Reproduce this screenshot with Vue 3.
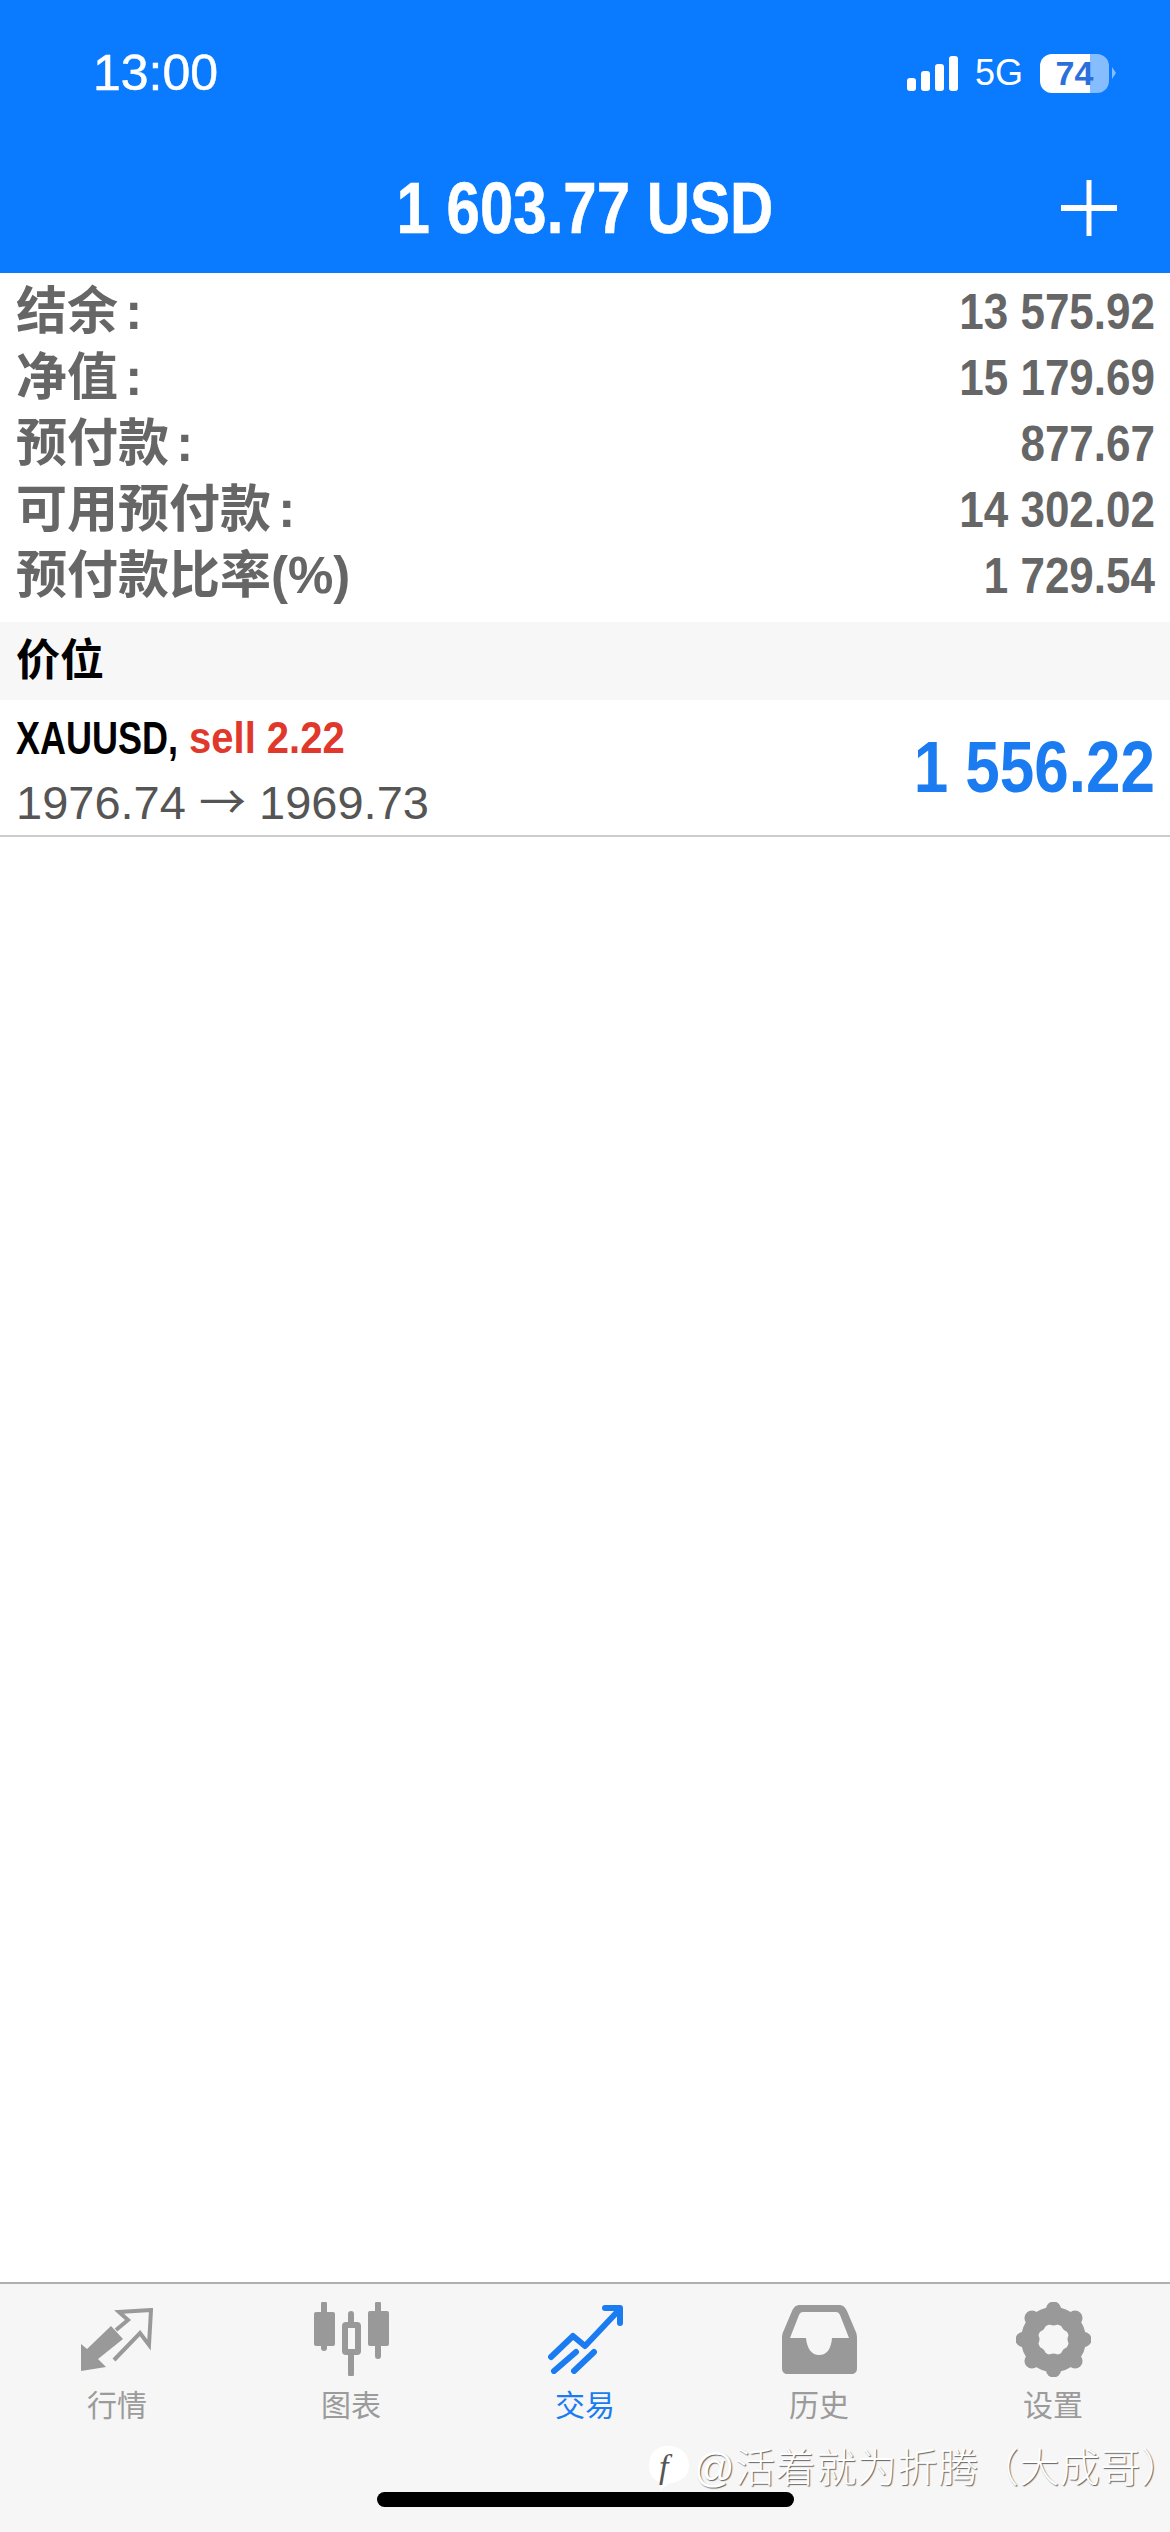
<template>
  <div class="screen">
    <!-- 顶部蓝色栏 -->
    <header class="top">
      <div class="status">
        <span class="time">13:00</span>
        <div class="status-right">
          <div class="signal">
            <i v-for="h in signalBars" :key="h" :style="{ height: h + 'px' }"></i>
          </div>
          <span class="net">5G</span>
          <div class="battery"><span>74</span></div>
          <b class="nub"></b>
        </div>
      </div>
      <div class="title-row">
        <span></span>
        <h1 class="title">1 603.77 USD</h1>
        <svg class="plus" width="56" height="56" viewBox="0 0 56 56">
          <path d="M28 0V56" stroke="#fff" stroke-width="5" />
          <path d="M0 28H56" stroke="#fff" stroke-width="6" />
        </svg>
      </div>
    </header>

    <main class="main">
      <!-- 账户信息 -->
      <section class="summary">
        <div v-for="row in summary" :key="row.label" class="sum-row">
          <span class="sum-label">{{ row.label }}</span>
          <span class="sum-value">{{ row.value }}</span>
        </div>
      </section>

      <div class="band">价位</div>

      <div class="position">
        <div class="pos-left">
          <div class="pos-head"><span class="sym">XAUUSD,</span><span class="side">sell 2.22</span></div>
          <div class="pos-price">1976.74 <span class="arrow">→</span> 1969.73</div>
        </div>
        <span class="profit">1 556.22</span>
      </div>
    </main>

    <!-- 底部导航 -->
    <nav class="tabs">
      <div class="tab-row">
        <div class="tab">
          <div class="tab-icon">
            <svg width="72" height="63" viewBox="0 0 72 63">
              <path d="M0 63V36L6 41L30 18L42 31L17 51L25 59Z" fill="#999" />
              <path d="M35 22L47 12L38 4L70 2L68 37L59 25L33 52" fill="none" stroke="#999" stroke-width="4" />
            </svg>
          </div>
          <span class="tab-label">行情</span>
        </div>
        <div class="tab">
          <div class="tab-icon">
            <svg width="75" height="74" viewBox="0 0 75 74">
              <path d="M10 2V46M64 2V54M37 12V72" stroke="#999" stroke-width="6" stroke-linecap="round" />
              <rect x="0" y="10" width="21" height="34" rx="2" fill="#999" />
              <rect x="54" y="9" width="21" height="35" rx="2" fill="#999" />
              <rect x="31" y="23" width="13" height="27" rx="1" fill="#f6f6f6" stroke="#999" stroke-width="6" />
            </svg>
          </div>
          <span class="tab-label">图表</span>
        </div>
        <div class="tab active">
          <div class="tab-icon">
            <svg width="75" height="70" viewBox="0 0 75 70" fill="none" stroke="#1a7cf0" stroke-width="6" stroke-linecap="round" stroke-linejoin="round">
              <path d="M3 53L25 32L37 42L71 6" />
              <path d="M57 4H72V19" />
              <path d="M6 67L28 48M26 67L46 48" />
            </svg>
          </div>
          <span class="tab-label">交易</span>
        </div>
        <div class="tab">
          <div class="tab-icon">
            <svg width="75" height="69" viewBox="0 0 75 69">
              <path fill="#999" fill-rule="evenodd" d="M18 0H57C61 0 63 2 65 6L73 25C74.500 28 75 30 75 33V63C75 67 73 69 69 69H6C2 69 0 67 0 63V33C0 30 .5 28 2 25L10 6C12 2 14 0 18 0ZM21 7C19 7 18 8 17 10L8 33H24C25 44 30 50 37 50C45 50 49 44 50 33H67L58 10C57 8 56 7 54 7Z" />
            </svg>
          </div>
          <span class="tab-label">历史</span>
        </div>
        <div class="tab">
          <div class="tab-icon">
            <svg width="75" height="75" viewBox="0 0 75 75">
              <circle cx="37.500" cy="37.500" r="24" fill="none" stroke="#999" stroke-width="17" />
              <line v-for="a in gearAngles" :key="a" x1="37.500" y1="16" x2="37.500" y2="7"
                stroke="#999" stroke-width="15" stroke-linecap="round" :transform="`rotate(${a} 37.500 37.500)`" />
            </svg>
          </div>
          <span class="tab-label">设置</span>
        </div>
      </div>
      <div class="home-bar"></div>
    </nav>

    <!-- 水印 -->
    <div class="watermark">
      <svg width="42" height="46" viewBox="0 0 42 46">
        <path d="M20 1C32 1 41 8 41 21C41 31 33 37 22 38L12 45L14 38C6 36 1 30 1 21C1 8 8 1 20 1Z" fill="#fff" />
        <text x="11" y="33" class="wm-f">f</text>
      </svg>
      <span class="wm-text">@活着就为折腾（大成哥）</span>
    </div>
  </div>
</template>

<script setup>
const signalBars = [13, 20, 27, 35]
const gearAngles = [0, 45, 90, 135, 180, 225, 270, 315]

const summary = [
  { label: '结余 :', value: '13 575.92' },
  { label: '净值 :', value: '15 179.69' },
  { label: '预付款 :', value: '877.67' },
  { label: '可用预付款 :', value: '14 302.02' },
  { label: '预付款比率(%)', value: '1 729.54' },
]
</script>

<style scoped>
.screen {
  position: relative;
  width: 1170px;
  height: 2532px;
  overflow: hidden;
  display: flex;
  flex-direction: column;
  background: #fff;
  font-family: "Liberation Sans", "Noto Sans CJK SC", sans-serif;
}

.top {
  height: 273px;
  background: #0a7aff;
  color: #fff;
  flex-shrink: 0;
}

.status {
  height: 146px;
  padding: 0 54px 0 93px;
  display: flex;
  align-items: center;
  justify-content: space-between;
}

.time {
  font-size: 50px;
  -webkit-text-stroke: 0.5px #fff;
}

.status-right {
  display: flex;
  align-items: center;
}

.signal {
  display: flex;
  align-items: flex-end;
  gap: 5px;
  height: 35px;
  margin-right: 17px;
}

.signal i {
  display: block;
  width: 9px;
  background: #fff;
  border-radius: 3px;
}

.net {
  font-size: 36px;
  margin-right: 17px;
}

.battery {
  width: 69px;
  height: 39px;
  border-radius: 12px;
  background: linear-gradient(90deg, #fff 72%, rgba(255, 255, 255, 0.5) 72%);
  display: flex;
  align-items: center;
  justify-content: center;
}

.battery span {
  color: #2a6fdc;
  font-size: 34px;
  font-weight: 700;
}

.nub {
  width: 0;
  height: 0;
  margin-left: 3px;
  border-left: 4px solid rgba(255, 255, 255, 0.5);
  border-top: 6px solid transparent;
  border-bottom: 6px solid transparent;
}

.title-row {
  height: 127px;
  padding: 0 53px 3px;
  display: grid;
  grid-template-columns: 1fr auto 1fr;
  align-items: center;
  box-sizing: border-box;
}

.title {
  margin: 0;
  font-size: 60px;
  font-weight: 700;
  transform: scaleY(1.2);
  -webkit-text-stroke: 0.5px #fff;
}

.plus {
  justify-self: end;
}

.main {
  flex: 1;
}

.summary {
  padding: 6px 15px 13px 16px;
}

.sum-row {
  height: 66px;
  display: flex;
  align-items: center;
  justify-content: space-between;
  color: #666;
  font-weight: 700;
}

.sum-label {
  font-size: 51px;
  line-height: 66px;
  word-spacing: -7px;
}

.sum-value {
  font-size: 44px;
  transform: scaleY(1.14);
}

.band {
  height: 78px;
  padding: 0 16px;
  background: #f7f7f7;
  color: #000;
  font-size: 44px;
  font-weight: 700;
  line-height: 78px;
}

.position {
  height: 135px;
  padding: 0 15px 0 16px;
  border-bottom: 2px solid #ccc;
  display: flex;
  align-items: center;
  justify-content: space-between;
}

.pos-head {
  height: 61px;
  line-height: 61px;
  font-weight: 700;
  display: flex;
  gap: 11px;
}

.sym {
  color: #000;
  font-size: 36px;
  transform: scaleY(1.28);
}

.side {
  color: #e0392b;
  font-size: 40px;
  transform: scaleY(1.13);
}

.pos-price {
  height: 61px;
  line-height: 61px;
  font-size: 47px;
  color: #555;
}

.arrow {
  font-family: "Noto Sans CJK SC", sans-serif;
}

.profit {
  color: #1a7cf0;
  font-size: 62px;
  font-weight: 700;
  transform: scaleY(1.16);
}

.tabs {
  height: 250px;
  flex-shrink: 0;
  background: #f6f6f6;
  border-top: 2px solid #b0b0b0;
  box-sizing: border-box;
}

.tab-row {
  display: grid;
  grid-template-columns: repeat(5, 1fr);
  padding-top: 15px;
}

.tab {
  display: flex;
  flex-direction: column;
  align-items: center;
  color: #9b9b9b;
}

.tab.active {
  color: #1a7cf0;
}

.tab-icon {
  height: 80px;
  display: flex;
  align-items: center;
  justify-content: center;
}

.tab-label {
  margin-top: 7px;
  font-size: 30px;
  line-height: 40px;
}

.home-bar {
  width: 417px;
  height: 15px;
  margin: 66px auto 0;
  background: #000;
  border-radius: 8px;
}

.watermark {
  position: absolute;
  left: 648px;
  top: 2445px;
  display: flex;
  align-items: center;
  gap: 4px;
  color: #fff;
}

.wm-f {
  font-family: "Liberation Serif", serif;
  font-style: italic;
  font-size: 34px;
  fill: #555;
}

.wm-text {
  font-size: 40px;
  line-height: 46px;
  font-weight: 300;
  letter-spacing: 0.6px;
  white-space: nowrap;
  text-shadow: 1px 1px 1px rgba(0, 0, 0, 0.6);
}
</style>
